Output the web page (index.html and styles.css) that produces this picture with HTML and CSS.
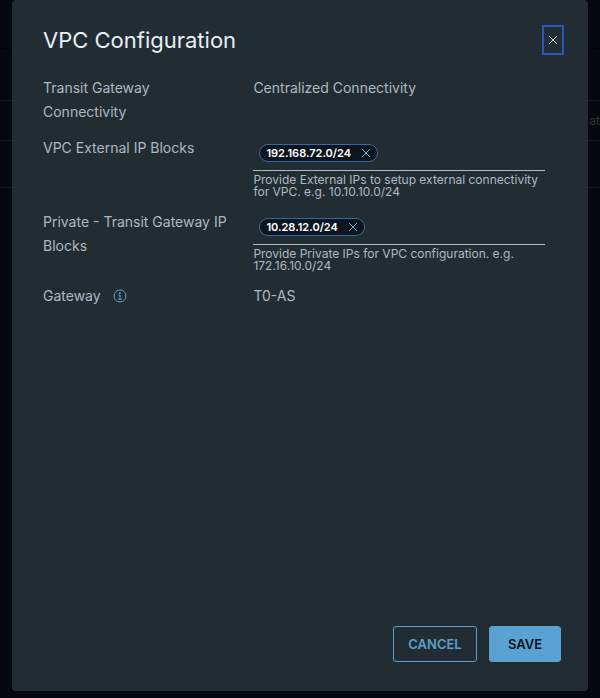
FILE: index.html
```html
<!DOCTYPE html>
<html lang="en">
<head>
<meta charset="utf-8">
<meta name="viewport" content="width=device-width, initial-scale=1">
<title>VPC Configuration</title>
<link rel="stylesheet" href="styles.css">
</head>
<body>
<div class="backdrop" aria-hidden="true">
  <div class="band band-top"></div>
  <div class="band band-tabs"></div>
  <div class="band band-head">at</div>
  <div class="band band-row"></div>
</div>
<div class="modal" role="dialog" aria-modal="true" aria-labelledby="title">
  <header class="modal-header">
    <h1 id="title">VPC Configuration</h1>
    <button class="close" type="button" aria-label="Close">
      <svg viewBox="0 0 10 10" width="10" height="10"><path d="M1 1l8 8M9 1l-8 8"/></svg>
    </button>
  </header>
  <form class="modal-form">
    <div class="rows">
      <div class="row">
        <span class="name">Transit Gateway Connectivity</span>
        <span class="value">Centralized Connectivity</span>
      </div>
      <div class="row">
        <label class="name" for="external">VPC External IP Blocks</label>
        <div class="value">
          <div class="field">
            <span class="chip">192.168.72.0/24
              <button type="button" aria-label="Remove 192.168.72.0/24"><svg viewBox="0 0 10 10" width="10" height="10"><path d="M1 1l8 8M9 1l-8 8"/></svg></button>
            </span>
            <input id="external" type="text">
          </div>
          <p class="help">Provide External IPs to setup external connectivity for VPC. e.g. 10.10.10.0/24</p>
        </div>
      </div>
      <div class="row">
        <label class="name" for="private">Private - Transit Gateway IP Blocks</label>
        <div class="value">
          <div class="field">
            <span class="chip">10.28.12.0/24
              <button type="button" aria-label="Remove 10.28.12.0/24"><svg viewBox="0 0 10 10" width="10" height="10"><path d="M1 1l8 8M9 1l-8 8"/></svg></button>
            </span>
            <input id="private" type="text">
          </div>
          <p class="help">Provide Private IPs for VPC configuration. e.g. 172.16.10.0/24</p>
        </div>
      </div>
      <div class="row">
        <span class="name with-info">Gateway
          <button class="info" type="button" aria-label="About the gateway">
            <svg viewBox="0 0 14 14" width="14" height="14"><circle cx="7" cy="7" r="6"/><path d="M5.5 6H7v4M5.2 10.2h3.6"/><circle class="dot" cx="6.9" cy="3.9" r=".9"/></svg>
          </button>
        </span>
        <span class="value">T0-AS</span>
      </div>
    </div>
    <footer class="actions">
      <button class="btn btn-outline" type="button">CANCEL</button>
      <button class="btn btn-primary" type="submit">SAVE</button>
    </footer>
  </form>
</div>
</body>
</html>
```
FILE: styles.css
```css
* {
  box-sizing: border-box;
}

body {
  margin: 0;
  min-height: 100vh;
  background: #05090d;
  color: #adb9c1;
  font: 14px/24px Inter, "Liberation Sans", sans-serif;
}

button,
input {
  margin: 0;
  padding: 0;
  border: 0;
  background: none;
  color: inherit;
  font: inherit;
}

svg {
  display: block;
  fill: none;
  stroke: currentColor;
}

.band {
  border-bottom: 1px solid #14191c;
}

.band-top {
  height: 49px;
  border-color: #010304;
}

.band-tabs {
  height: 52px;
}

.band-head {
  height: 40px;
  line-height: 39px;
  font-size: 12px;
  text-align: right;
  color: #303335;
}

.band-row {
  height: 47px;
}

.modal {
  position: fixed;
  inset: 0 12px 7px;
  display: flex;
  flex-direction: column;
  padding: 25px 24px 29px 31px;
  border-radius: 4px;
  background: #222d33;
}

.modal-header {
  display: flex;
  justify-content: space-between;
  align-items: center;
  margin-bottom: 21px;
}

h1 {
  margin: 0;
  color: #e9eff4;
  font-size: 22px;
  font-weight: 400;
  line-height: 30px;
}

.close {
  display: grid;
  place-items: center;
  width: 22px;
  height: 30px;
  border: 2px solid #2858bd;
  color: #d3dde3;
}

.modal-form {
  display: flex;
  flex: 1;
  flex-direction: column;
  justify-content: space-between;
}

.rows {
  display: grid;
  gap: 12px;
  padding-right: 19px;
}

.row {
  display: grid;
  grid-template-columns: minmax(0, 2fr) minmax(0, 3fr);
  gap: 16px;
}

.name {
  padding-right: 4px;
}

.field {
  display: flex;
  align-items: center;
  height: 35px;
  padding-left: 6px;
  border-bottom: 1px solid #adbbc4;
}

.field input {
  flex: 1;
  min-width: 0;
  outline: 0;
}

.chip {
  display: flex;
  align-items: center;
  gap: 10px;
  height: 18px;
  padding: 0 6px;
  border: 1px solid #38699c;
  border-radius: 9px;
  background: #0d161f;
  color: #fff;
  font-size: 11px;
  font-weight: 600;
  line-height: 16px;
}

.chip button {
  color: #6eaed6;
}

.help {
  margin: 3px 0 0;
  font-size: 12px;
  line-height: 12px;
}

.with-info {
  display: flex;
  align-items: center;
  gap: 12px;
}

.info {
  color: #5aa5cc;
}

.dot {
  fill: currentColor;
  stroke: none;
}

.actions {
  display: flex;
  justify-content: flex-end;
  gap: 12px;
  padding-right: 3px;
}

.btn {
  height: 36px;
  padding: 0 12px;
  border: 1px solid #5b9fcc;
  border-radius: 3px;
  font-size: 13px;
  font-weight: 600;
}

.btn-outline {
  min-width: 84px;
  color: #5b9fcc;
}

.btn-primary {
  min-width: 72px;
  background: #5aa2d3;
  color: #06121b;
}
```
